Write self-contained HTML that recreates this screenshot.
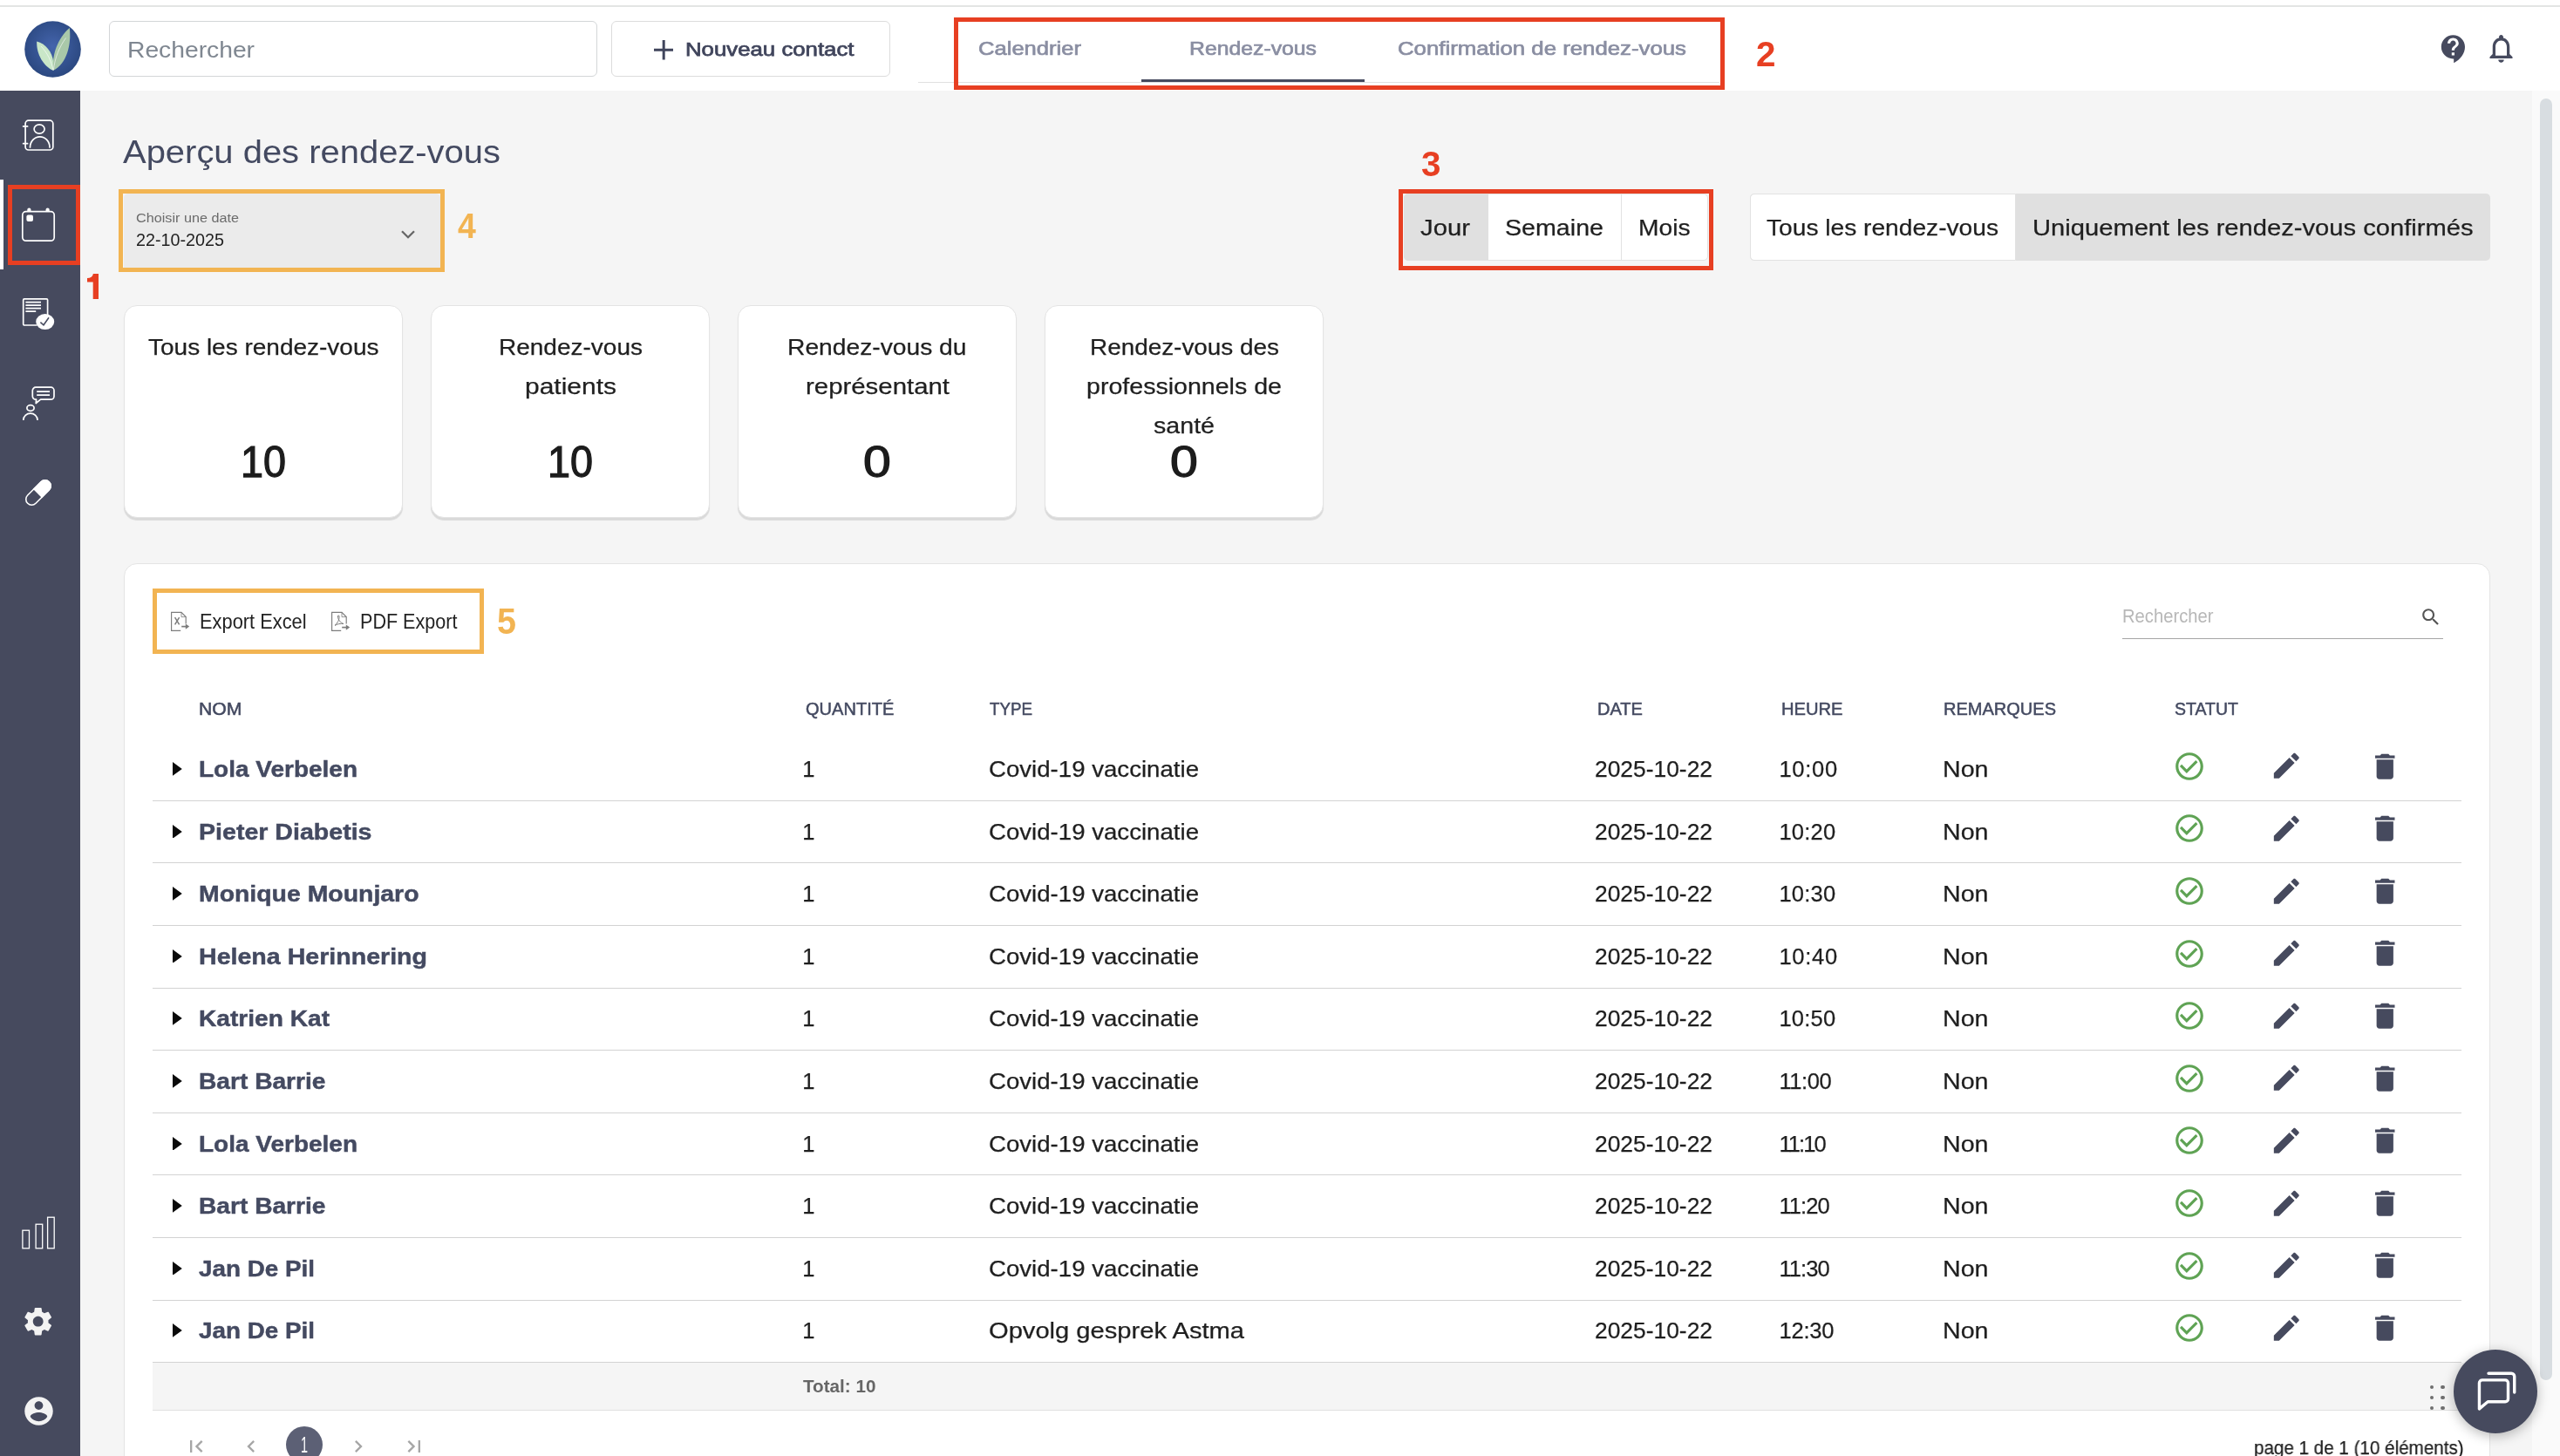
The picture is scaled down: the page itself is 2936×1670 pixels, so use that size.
<!DOCTYPE html>
<html lang="fr"><head><meta charset="utf-8"><title>Aperçu des rendez-vous</title><style>html,body{margin:0;padding:0;}body{width:2936px;height:1670px;overflow:hidden;position:relative;background:#f5f5f5;font-family:"Liberation Sans", sans-serif;}
#root{position:absolute;left:0;top:0;width:2936px;height:1670px;will-change:transform;}.a{position:absolute;display:block;}.t{position:absolute;white-space:nowrap;font-family:"Liberation Sans", sans-serif;}</style></head><body><div id="root">
<div class="a" style="left:0.00px;top:0.00px;width:2936.00px;height:104.00px;background:#fff;"></div>
<div class="a" style="left:0.00px;top:6.00px;width:2936.00px;height:2.00px;background:#e3e5e4;"></div>
<div class="a" style="left:0.00px;top:104.00px;width:2936.00px;height:1566.00px;background:#f5f5f5;"></div>
<div class="a" style="left:2904.00px;top:104.00px;width:32.00px;height:1566.00px;background:#fafafa;"></div>
<div class="a" style="left:2913.30px;top:112.70px;width:13.40px;height:1470.00px;background:#d8dde1;border-radius:7px;"></div>
<div class="a" style="left:0.00px;top:104.00px;width:92.00px;height:1566.00px;background:#464a5e;"></div>
<div class="a" style="left:0.00px;top:206.00px;width:4.00px;height:103.00px;background:#fff;"></div>
<svg class="a" style="left:28.00px;top:23.60px;" width="65.00" height="65.00" viewBox="0 0 65 65"><defs><radialGradient id="lg" cx="50%" cy="45%" r="55%"><stop offset="0" stop-color="#4464ac"/><stop offset="1" stop-color="#2b4880"/></radialGradient></defs>
<circle cx="32.5" cy="32.5" r="32.3" fill="url(#lg)"/>
<path d="M33 56.8 C22 52 13.5 38 14.2 23.4 C24 25.5 32.2 36 33.2 47 Z" fill="#c9e7c8"/>
<path d="M33 56.8 C31 40 38 20 51.8 8 C54 26 49 49 33 56.8 Z" fill="#a9c8a9"/>
<path d="M33 56.5 C31 46 26 36 19 29" stroke="#fff" stroke-width="0.7" fill="none" opacity="0.85"/>
<path d="M33.3 56.5 C35 42 40 30 47.5 19.5" stroke="#fff" stroke-width="0.7" fill="none" opacity="0.85"/></svg>
<div class="a" style="left:125.00px;top:24.00px;width:559.60px;height:63.60px;background:#fff;border:1.5px solid #d3d6d8;border-radius:6px;box-sizing:border-box;"></div>
<div id="t1" class="t" style="left:146.00px;transform-origin:0 0;top:43.78px;font-size:26.60px;line-height:26.60px;font-weight:400;color:#7f8791;transform:scaleX(1.0621);">Rechercher</div>
<div class="a" style="left:701.00px;top:24.00px;width:319.60px;height:63.60px;background:#fff;border:1.5px solid #dcdcdc;border-radius:6px;box-sizing:border-box;"></div>
<svg class="a" style="left:749.60px;top:46.40px;" width="22.40" height="22.60" viewBox="0 0 22.4 22.6"><path d="M11.2 0V22.6M0 11.3H22.4" stroke="#40455c" stroke-width="3" fill="none"/></svg>
<div id="t2" class="t" style="left:786.40px;transform-origin:0 0;top:45.58px;font-size:22.00px;line-height:22.00px;font-weight:400;color:#40455c;transform:scaleX(1.1720);-webkit-text-stroke:0.75px #40455c;">Nouveau contact</div>
<div class="a" style="left:1053.00px;top:93.60px;width:919.00px;height:1.30px;background:#e0e0e0;"></div>
<div class="a" style="left:1309.00px;top:91.10px;width:255.60px;height:2.70px;background:#464a5e;"></div>
<div id="t3" class="t" style="left:1121.80px;transform-origin:0 0;top:44.67px;font-size:22.60px;line-height:22.60px;font-weight:400;color:#8a8ea2;transform:scaleX(1.1321);-webkit-text-stroke:0.70px #8a8ea2;">Calendrier</div>
<div id="t4" class="t" style="left:1364.00px;transform-origin:0 0;top:44.67px;font-size:22.60px;line-height:22.60px;font-weight:400;color:#8a8ea2;transform:scaleX(1.0967);-webkit-text-stroke:0.70px #8a8ea2;">Rendez-vous</div>
<div id="t5" class="t" style="left:1603.00px;transform-origin:0 0;top:44.67px;font-size:22.60px;line-height:22.60px;font-weight:400;color:#8a8ea2;transform:scaleX(1.1409);-webkit-text-stroke:0.70px #8a8ea2;">Confirmation de rendez-vous</div>
<div class="a" style="left:1094.00px;top:20.40px;width:883.60px;height:82.20px;border:5.4px solid #e73f22;box-sizing:border-box;"></div>
<div id="t6" class="t" style="left:2013.50px;transform-origin:0 0;top:42.14px;font-size:40.00px;line-height:40.00px;font-weight:700;color:#e73f22;transform:scaleX(1.0112);">2</div>
<svg class="a" style="left:2795.20px;top:36.60px;" width="38.40" height="38.40" viewBox="0 0 24 24"><path fill="#464a5e" d="M11.5 2C6.81 2 3 5.81 3 10.5S6.81 19 11.5 19h.5v3c4.86-2.34 8-7 8-11.5C20 5.81 16.19 2 11.5 2zm1 14.5h-2v-2h2v2zm0-3.5h-2c0-3.25 3-3 3-5 0-1.1-.9-2-2-2s-2 .9-2 2h-2c0-2.21 1.79-4 4-4s4 1.79 4 4c0 2.5-3 2.75-3 5z"/></svg>
<svg class="a" style="left:2849.30px;top:36.10px;" width="39.00" height="39.00" viewBox="0 0 24 24"><path fill="#464a5e" d="M12 22c1.1 0 2-.9 2-2h-4c0 1.1.9 2 2 2zm6-6v-5c0-3.07-1.63-5.64-4.5-6.32V4c0-.83-.67-1.5-1.5-1.5s-1.5.67-1.5 1.5v.68C7.64 5.36 6 7.92 6 11v5l-2 2v1h16v-1l-2-2zm-2 1H8v-6c0-2.48 1.51-4.5 4-4.5s4 2.02 4 4.5v6z"/></svg>
<svg class="a" style="left:22.00px;top:132.00px;" width="44.00" height="46.00" viewBox="0 0 44 46"><g stroke="#fff" fill="none" stroke-width="1.7" stroke-linecap="round" stroke-linejoin="round" stroke-width="2.1"><rect x="7.1" y="6.2" width="31.7" height="33.8" rx="3.6"/>
<ellipse cx="23.1" cy="16" rx="6" ry="5.2"/><path d="M12.5 37 a11.25 12.2 0 0 1 22.5 0"/>
<path d="M4.6 12.9h5M4.6 32.7h5"/></g></svg>
<div class="a" style="left:9.00px;top:212.00px;width:83.00px;height:92.00px;border:5px solid #e73f22;box-sizing:border-box;"></div>
<svg class="a" style="left:100.00px;top:313.90px;" width="13.20" height="29.00" viewBox="0 0 13.2 29"><path d="M6.9 0H13.2V29H6.7V9.4H0V5C3.9 4.9 6.3 3.4 6.9 0Z" fill="#e73f22"/></svg>
<svg class="a" style="left:22.00px;top:234.00px;" width="44.00" height="46.00" viewBox="0 0 44 46"><g stroke="#fff" fill="none" stroke-width="1.7" stroke-linecap="round" stroke-linejoin="round" stroke-width="2"><rect x="3.8" y="8.6" width="36.4" height="33.6" rx="4"/>
</g><path d="M9.3 8.2V6.6a2.1 2.1 0 0 1 4.2 0v1.6zM30.5 8.2V6.6a2.1 2.1 0 0 1 4.2 0v1.6z" fill="#fff"/><rect x="8.4" y="12.6" width="7.6" height="7.4" rx="2" fill="#fff"/></svg>
<svg class="a" style="left:22.00px;top:336.00px;" width="48.00" height="48.00" viewBox="0 0 48 48"><g stroke="#fff" fill="none" stroke-width="1.7" stroke-linecap="round" stroke-linejoin="round" stroke-width="1.6"><path d="M32.6 25 V8 a1.2 1.2 0 0 0 -1.2 -1.2 H5.9 a1.2 1.2 0 0 0 -1.2 1.2 V35.8 a1.2 1.2 0 0 0 1.2 1.2 H20"/>
<path d="M7.4 10.6h17.6M7.4 14.05h17.6M7.4 17.6h17.6M7.4 21.1h11.8" stroke-linecap="butt"/></g>
<ellipse cx="29.7" cy="33.1" rx="10.5" ry="9" fill="#fff"/><path d="M24.4 33.6l3.6 3.2 6-8.6" stroke="#464a5e" stroke-width="1.5" fill="none"/></svg>
<svg class="a" style="left:22.00px;top:438.00px;" width="46.00" height="48.00" viewBox="0 0 46 48"><g stroke="#fff" fill="none" stroke-width="1.7" stroke-linecap="round" stroke-linejoin="round" stroke-width="1.7"><path d="M19 6.2h17.3a3.7 3.7 0 0 1 3.7 3.7v6.6a3.7 3.7 0 0 1-3.7 3.7H24.6l-5.4 4.3.4-4.3H19a3.7 3.7 0 0 1-3.7-3.7V9.9A3.7 3.7 0 0 1 19 6.2z"/>
<path d="M20.2 11.2h14.8M20.2 15.1h14.8" stroke-linecap="butt"/><ellipse cx="13" cy="30" rx="4.1" ry="3.3"/><path d="M4.8 44 v-.2 a8.1 7.7 0 0 1 16.2 0 v.2" stroke-linecap="butt"/></g></svg>
<svg class="a" style="left:24.30px;top:544.80px;" width="40.00" height="40.00" viewBox="0 0 40 40"><g transform="rotate(-45 20 20)"><rect x="2.6" y="13.4" width="34.8" height="13.2" rx="6.6" fill="none" stroke="#fff" stroke-width="1.6"/>
<path d="M19.4 13.4h11.4a6.6 6.6 0 0 1 0 13.2H19.4z" fill="#fff" stroke="#fff" stroke-width="1.6"/></g></svg>
<svg class="a" style="left:22.00px;top:1392.00px;" width="44.00" height="44.00" viewBox="0 0 44 44"><g stroke="#fff" fill="none" stroke-width="1.3"><rect x="3.9" y="19.2" width="7.6" height="20.6"/><rect x="19.1" y="12.2" width="7.6" height="27.6"/><rect x="32.6" y="4.2" width="7.6" height="35.6"/></g></svg>
<svg class="a" style="left:24.30px;top:1496.00px;" width="39.40" height="39.40" viewBox="0 0 24 24"><path fill="#f3f3f3" d="M19.14 12.94c.04-.3.06-.61.06-.94 0-.32-.02-.64-.07-.94l2.03-1.58c.18-.14.23-.41.12-.61l-1.92-3.32c-.12-.22-.37-.29-.59-.22l-2.39.96c-.5-.38-1.03-.7-1.62-.94l-.36-2.54c-.04-.24-.24-.41-.48-.41h-3.84c-.24 0-.43.17-.47.41l-.36 2.54c-.59.24-1.13.57-1.62.94l-2.39-.96c-.22-.08-.47 0-.59.22L2.74 8.87c-.12.21-.08.47.12.61l2.03 1.58c-.05.3-.09.63-.09.94s.02.64.07.94l-2.03 1.58c-.18.14-.23.41-.12.61l1.92 3.32c.12.22.37.29.59.22l2.39-.96c.5.38 1.03.7 1.62.94l.36 2.54c.05.24.24.41.48.41h3.84c.24 0 .44-.17.47-.41l.36-2.54c.59-.24 1.13-.56 1.62-.94l2.39.96c.22.08.47 0 .59-.22l1.92-3.32c.12-.22.07-.47-.12-.61l-2.01-1.58zM12 15.6c-1.98 0-3.6-1.62-3.6-3.6s1.62-3.6 3.6-3.6 3.6 1.62 3.6 3.6-1.62 3.6-3.6 3.6z"/></svg>
<svg class="a" style="left:24.50px;top:1599.30px;" width="39.00" height="39.00" viewBox="0 0 24 24"><path fill="#f3f3f3" d="M12 2C6.48 2 2 6.48 2 12s4.48 10 10 10 10-4.48 10-10S17.52 2 12 2zm0 3c1.66 0 3 1.34 3 3s-1.34 3-3 3-3-1.34-3-3 1.34-3 3-3zm0 14.2c-2.5 0-4.71-1.28-6-3.22.03-1.99 4-3.08 6-3.08 1.99 0 5.97 1.09 6 3.08-1.29 1.94-3.5 3.22-6 3.22z"/></svg>
<div id="t7" class="t" style="left:141.00px;transform-origin:0 0;top:157.36px;font-size:36.20px;line-height:36.20px;font-weight:400;color:#444a61;transform:scaleX(1.1039);">Aperçu des rendez-vous</div>
<div class="a" style="left:141.60px;top:222.20px;width:363.20px;height:84.80px;background:#ebebeb;border-radius:5px 5px 0 0;"></div>
<div class="a" style="left:136.00px;top:217.00px;width:373.80px;height:94.60px;border:5px solid #f2b452;box-sizing:border-box;"></div>
<div id="t8" class="t" style="left:155.50px;transform-origin:0 0;top:241.96px;font-size:15.40px;line-height:15.40px;font-weight:400;color:#6b6b6b;transform:scaleX(1.0528);">Choisir une date</div>
<div id="t9" class="t" style="left:155.50px;transform-origin:0 0;top:265.36px;font-size:20.60px;line-height:20.60px;font-weight:400;color:#1f1f1f;transform:scaleX(0.9588);">22-10-2025</div>
<svg class="a" style="left:459.00px;top:263.00px;" width="18.00" height="12.00" viewBox="0 0 18 12"><path d="M2 2.2l7 7 7-7" stroke="#666" stroke-width="2.3" fill="none"/></svg>
<div id="t10" class="t" style="left:525.20px;transform-origin:0 0;top:239.29px;font-size:41.00px;line-height:41.00px;font-weight:700;color:#f2b452;transform:scaleX(0.9118);">4</div>
<div id="t11" class="t" style="left:1629.50px;transform-origin:0 0;top:168.14px;font-size:40.00px;line-height:40.00px;font-weight:700;color:#e73f22;transform:scaleX(1.0112);">3</div>
<div class="a" style="left:1610.00px;top:222.30px;width:349.00px;height:77.20px;background:#fff;border:1px solid #e2e2e2;border-radius:5px;box-sizing:border-box;"></div>
<div class="a" style="left:1610.00px;top:222.30px;width:97.00px;height:77.20px;background:#e0e0e0;border-radius:5px 0 0 5px;"></div>
<div class="a" style="left:1859.00px;top:223.30px;width:1.00px;height:75.20px;background:#e2e2e2;"></div>
<div id="t12" class="t" style="left:1629.00px;transform-origin:0 0;top:249.16px;font-size:25.80px;line-height:25.80px;font-weight:400;color:#1f1f1f;transform:scaleX(1.1357);-webkit-text-stroke:0.25px #1f1f1f;">Jour</div>
<div id="t13" class="t" style="left:1726.00px;transform-origin:0 0;top:249.16px;font-size:25.80px;line-height:25.80px;font-weight:400;color:#1f1f1f;transform:scaleX(1.1097);-webkit-text-stroke:0.25px #1f1f1f;">Semaine</div>
<div id="t14" class="t" style="left:1879.00px;transform-origin:0 0;top:249.16px;font-size:25.80px;line-height:25.80px;font-weight:400;color:#1f1f1f;transform:scaleX(1.0924);-webkit-text-stroke:0.25px #1f1f1f;">Mois</div>
<div class="a" style="left:1603.80px;top:216.50px;width:361.00px;height:93.00px;border:5.4px solid #e73f22;box-sizing:border-box;"></div>
<div class="a" style="left:2007.00px;top:222.30px;width:849.00px;height:77.20px;background:#e0e0e0;border-radius:5px;"></div>
<div class="a" style="left:2007.00px;top:222.30px;width:304.50px;height:77.20px;background:#fff;border:1px solid #e2e2e2;border-radius:5px 0 0 5px;box-sizing:border-box;"></div>
<div id="t15" class="t" style="left:2026.00px;transform-origin:0 0;top:249.16px;font-size:25.80px;line-height:25.80px;font-weight:400;color:#1f1f1f;transform:scaleX(1.0912);-webkit-text-stroke:0.25px #1f1f1f;">Tous les rendez-vous</div>
<div id="t16" class="t" style="left:2331.00px;transform-origin:0 0;top:249.16px;font-size:25.80px;line-height:25.80px;font-weight:400;color:#1f1f1f;transform:scaleX(1.1300);-webkit-text-stroke:0.25px #1f1f1f;">Uniquement les rendez-vous confirmés</div>
<div class="a" style="left:142.20px;top:350.20px;width:320.00px;height:244.20px;background:#fff;border:1px solid #e4e4e4;border-radius:15px;box-sizing:border-box;box-shadow:0 3px 1px rgba(0,0,0,0.115);"></div>
<div id="t17" class="t" style="left:169.75px;transform-origin:0 0;top:385.64px;font-size:25.70px;line-height:25.70px;font-weight:400;color:#1f1f1f;transform:scaleX(1.0897);-webkit-text-stroke:0.25px #1f1f1f;">Tous les rendez-vous</div>
<div id="t18" class="t" style="left:276.00px;transform-origin:0 0;top:504.78px;font-size:49.40px;line-height:49.40px;font-weight:400;color:#1c1c1c;transform:scaleX(0.9465);-webkit-text-stroke:1.25px #1c1c1c;">10</div>
<div class="a" style="left:494.20px;top:350.20px;width:320.00px;height:244.20px;background:#fff;border:1px solid #e4e4e4;border-radius:15px;box-sizing:border-box;box-shadow:0 3px 1px rgba(0,0,0,0.115);"></div>
<div id="t19" class="t" style="left:571.50px;transform-origin:0 0;top:385.64px;font-size:25.70px;line-height:25.70px;font-weight:400;color:#1f1f1f;transform:scaleX(1.0901);-webkit-text-stroke:0.25px #1f1f1f;">Rendez-vous</div>
<div id="t20" class="t" style="left:601.50px;transform-origin:0 0;top:430.84px;font-size:25.70px;line-height:25.70px;font-weight:400;color:#1f1f1f;transform:scaleX(1.1669);-webkit-text-stroke:0.25px #1f1f1f;">patients</div>
<div id="t21" class="t" style="left:628.00px;transform-origin:0 0;top:504.78px;font-size:49.40px;line-height:49.40px;font-weight:400;color:#1c1c1c;transform:scaleX(0.9465);-webkit-text-stroke:1.25px #1c1c1c;">10</div>
<div class="a" style="left:846.20px;top:350.20px;width:320.00px;height:244.20px;background:#fff;border:1px solid #e4e4e4;border-radius:15px;box-sizing:border-box;box-shadow:0 3px 1px rgba(0,0,0,0.115);"></div>
<div id="t22" class="t" style="left:903.25px;transform-origin:0 0;top:385.64px;font-size:25.70px;line-height:25.70px;font-weight:400;color:#1f1f1f;transform:scaleX(1.0986);-webkit-text-stroke:0.25px #1f1f1f;">Rendez-vous du</div>
<div id="t23" class="t" style="left:923.50px;transform-origin:0 0;top:430.84px;font-size:25.70px;line-height:25.70px;font-weight:400;color:#1f1f1f;transform:scaleX(1.1440);-webkit-text-stroke:0.25px #1f1f1f;">représentant</div>
<div id="t24" class="t" style="left:990.10px;transform-origin:0 0;top:504.78px;font-size:49.40px;line-height:49.40px;font-weight:400;color:#1c1c1c;transform:scaleX(1.1577);-webkit-text-stroke:1.25px #1c1c1c;">0</div>
<div class="a" style="left:1198.20px;top:350.20px;width:320.00px;height:244.20px;background:#fff;border:1px solid #e4e4e4;border-radius:15px;box-sizing:border-box;box-shadow:0 3px 1px rgba(0,0,0,0.115);"></div>
<div id="t25" class="t" style="left:1249.50px;transform-origin:0 0;top:385.64px;font-size:25.70px;line-height:25.70px;font-weight:400;color:#1f1f1f;transform:scaleX(1.0855);-webkit-text-stroke:0.25px #1f1f1f;">Rendez-vous des</div>
<div id="t26" class="t" style="left:1246.00px;transform-origin:0 0;top:430.84px;font-size:25.70px;line-height:25.70px;font-weight:400;color:#1f1f1f;transform:scaleX(1.1124);-webkit-text-stroke:0.25px #1f1f1f;">professionnels de</div>
<div id="t27" class="t" style="left:1323.00px;transform-origin:0 0;top:476.04px;font-size:25.70px;line-height:25.70px;font-weight:400;color:#1f1f1f;transform:scaleX(1.1139);-webkit-text-stroke:0.25px #1f1f1f;">santé</div>
<div id="t28" class="t" style="left:1342.10px;transform-origin:0 0;top:504.78px;font-size:49.40px;line-height:49.40px;font-weight:400;color:#1c1c1c;transform:scaleX(1.1577);-webkit-text-stroke:1.25px #1c1c1c;">0</div>
<div class="a" style="left:142.40px;top:646.40px;width:2714.10px;height:1100.00px;background:#fff;border:1px solid #e4e4e4;border-radius:15px;box-sizing:border-box;"></div>
<div class="a" style="left:175.20px;top:675.20px;width:379.50px;height:74.80px;border:5px solid #f2b452;box-sizing:border-box;"></div>
<div id="t29" class="t" style="left:570.00px;transform-origin:0 0;top:692.08px;font-size:42.20px;line-height:42.20px;font-weight:700;color:#f2b452;transform:scaleX(0.9374);">5</div>
<svg class="a" style="left:195.00px;top:701.00px;" width="23.00" height="24.00" viewBox="0 0 23 24"><g fill="none" stroke="#7c7c7c" stroke-width="1.15"><path d="M18.2 14.6V6.6L13 1.4H1.6v21h10.6"/><path d="M13 1.4v5.2h5.2" stroke-width=".8"/></g>
<path d="M5.6 7.2l5 8.2M10.6 7.2l-5 8.2" stroke="#7c7c7c" stroke-width="1.5" fill="none"/>
<path d="M13.2 17.6h5.4" stroke="#7c7c7c" stroke-width="1.7" fill="none"/><path d="M17.8 14.4l4.4 3.2-4.4 3.2z" fill="#7c7c7c"/></svg>
<div id="t30" class="t" style="left:229.20px;transform-origin:0 0;top:702.22px;font-size:23.60px;line-height:23.60px;font-weight:400;color:#222;transform:scaleX(0.9256);">Export Excel</div>
<svg class="a" style="left:379.20px;top:701.00px;" width="23.00" height="24.00" viewBox="0 0 23 24"><g fill="none" stroke="#7c7c7c" stroke-width="1.15"><path d="M18.2 14.6V6.6L13 1.4H1.6v21h10.6"/><path d="M13 1.4v5.2h5.2" stroke-width=".8"/></g>
<path d="M5 16.4c3.2-2.8 5.4-6.8 5-10.6-.2-1.3-1.6-1.3-1.6.1.2 4 3 7.2 6.6 8.6-3.4-.6-7.2.2-10 1.9z" stroke="#7c7c7c" stroke-width="1" fill="none"/>
<path d="M13.2 18.6h5.4" stroke="#7c7c7c" stroke-width="1.7" fill="none"/><path d="M17.8 15.4l4.4 3.2-4.4 3.2z" fill="#7c7c7c"/></svg>
<div id="t31" class="t" style="left:412.60px;transform-origin:0 0;top:702.22px;font-size:23.60px;line-height:23.60px;font-weight:400;color:#222;transform:scaleX(0.9136);">PDF Export</div>
<div id="t32" class="t" style="left:2434.00px;transform-origin:0 0;top:696.68px;font-size:21.40px;line-height:21.40px;font-weight:400;color:#b7b7b7;transform:scaleX(0.9450);">Rechercher</div>
<div class="a" style="left:2433.70px;top:731.70px;width:368.60px;height:1.20px;background:#a6a6a6;"></div>
<svg class="a" style="left:2775.20px;top:694.90px;" width="25.60" height="25.60" viewBox="0 0 24 24"><path fill="#555" d="M15.5 14h-.79l-.28-.27C15.41 12.59 16 11.11 16 9.5 16 5.91 13.09 3 9.5 3S3 5.91 3 9.5 5.91 16 9.5 16c1.61 0 3.09-.59 4.23-1.57l.27.28v.79l5 4.99L20.49 19l-4.99-5zm-6 0C7.01 14 5 11.99 5 9.5S7.01 5 9.5 5 14 7.01 14 9.5 11.99 14 9.5 14z"/></svg>
<div id="t33" class="t" style="left:227.50px;transform-origin:0 0;top:803.64px;font-size:19.80px;line-height:19.80px;font-weight:400;color:#444a61;transform:scaleX(1.0724);-webkit-text-stroke:0.50px #444a61;">NOM</div>
<div id="t34" class="t" style="left:923.50px;transform-origin:0 0;top:803.64px;font-size:19.80px;line-height:19.80px;font-weight:400;color:#444a61;transform:scaleX(1.0148);-webkit-text-stroke:0.50px #444a61;">QUANTITÉ</div>
<div id="t35" class="t" style="left:1135.00px;transform-origin:0 0;top:803.64px;font-size:19.80px;line-height:19.80px;font-weight:400;color:#444a61;transform:scaleX(0.9483);-webkit-text-stroke:0.50px #444a61;">TYPE</div>
<div id="t36" class="t" style="left:1831.50px;transform-origin:0 0;top:803.64px;font-size:19.80px;line-height:19.80px;font-weight:400;color:#444a61;transform:scaleX(1.0137);-webkit-text-stroke:0.50px #444a61;">DATE</div>
<div id="t37" class="t" style="left:2043.00px;transform-origin:0 0;top:803.64px;font-size:19.80px;line-height:19.80px;font-weight:400;color:#444a61;transform:scaleX(1.0181);-webkit-text-stroke:0.50px #444a61;">HEURE</div>
<div id="t38" class="t" style="left:2228.50px;transform-origin:0 0;top:803.64px;font-size:19.80px;line-height:19.80px;font-weight:400;color:#444a61;transform:scaleX(1.0118);-webkit-text-stroke:0.50px #444a61;">REMARQUES</div>
<div id="t39" class="t" style="left:2493.50px;transform-origin:0 0;top:803.64px;font-size:19.80px;line-height:19.80px;font-weight:400;color:#444a61;transform:scaleX(0.9865);-webkit-text-stroke:0.50px #444a61;">STATUT</div>
<svg class="a" style="left:197.80px;top:873.90px;" width="10.80" height="15.80" viewBox="0 0 10.8 15.8"><path d="M0 0L10.8 7.9 0 15.8z" fill="#0a0a0a"/></svg>
<div id="t40" class="t" style="left:227.60px;transform-origin:0 0;top:869.93px;font-size:25.60px;line-height:25.60px;font-weight:700;color:#444a61;transform:scaleX(1.0936);-webkit-text-stroke:0.45px #444a61;">Lola Verbelen</div>
<div id="t41" class="t" style="left:920.20px;transform-origin:0 0;top:870.01px;font-size:25.50px;line-height:25.50px;font-weight:400;color:#1f1f1f;-webkit-text-stroke:0.25px #1f1f1f;">1</div>
<div id="t42" class="t" style="left:1134.00px;transform-origin:0 0;top:870.01px;font-size:25.50px;line-height:25.50px;font-weight:400;color:#1f1f1f;transform:scaleX(1.0830);-webkit-text-stroke:0.25px #1f1f1f;">Covid-19 vaccinatie</div>
<div id="t43" class="t" style="left:1829.00px;transform-origin:0 0;top:870.01px;font-size:25.50px;line-height:25.50px;font-weight:400;color:#1f1f1f;transform:scaleX(1.0349);-webkit-text-stroke:0.25px #1f1f1f;">2025-10-22</div>
<div id="t44" class="t" style="left:2040.40px;transform-origin:0 0;top:870.01px;font-size:25.50px;line-height:25.50px;font-weight:400;color:#1f1f1f;letter-spacing:0.738px;-webkit-text-stroke:0.25px #1f1f1f;">10:00</div>
<div id="t45" class="t" style="left:2227.50px;transform-origin:0 0;top:870.01px;font-size:25.50px;line-height:25.50px;font-weight:400;color:#1f1f1f;transform:scaleX(1.1222);-webkit-text-stroke:0.25px #1f1f1f;">Non</div>
<svg class="a" style="left:2491.80px;top:859.75px;" width="38.00" height="38.00" viewBox="0 0 24 24"><path fill="#5fa354" d="M16.59 7.58L10 14.17l-3.59-3.58L5 12l5 5 8-8zM12 2C6.48 2 2 6.48 2 12s4.48 10 10 10 10-4.48 10-10S17.52 2 12 2zm0 18c-4.42 0-8-3.58-8-8s3.58-8 8-8 8 3.58 8 8-3.58 8-8 8z"/></svg>
<svg class="a" style="left:2603.40px;top:859.45px;" width="38.60" height="38.60" viewBox="0 0 24 24"><path fill="#464a5e" d="M3 17.25V21h3.75L17.81 9.94l-3.75-3.75L3 17.25zM20.71 7.04c.39-.39.39-1.02 0-1.41l-2.34-2.34c-.39-.39-1.02-.39-1.41 0l-1.83 1.83 3.75 3.75 1.83-1.83z"/></svg>
<svg class="a" style="left:2715.70px;top:859.50px;" width="38.50" height="38.50" viewBox="0 0 24 24"><path fill="#464a5e" d="M6 19c0 1.1.9 2 2 2h8c1.1 0 2-.9 2-2V7H6v12zM19 4h-3.5l-1-1h-5l-1 1H5v2h14V4z"/></svg>
<div class="a" style="left:175.00px;top:917.75px;width:2648.00px;height:1.10px;background:#d3d3d3;"></div>
<svg class="a" style="left:197.80px;top:945.50px;" width="10.80" height="15.80" viewBox="0 0 10.8 15.8"><path d="M0 0L10.8 7.9 0 15.8z" fill="#0a0a0a"/></svg>
<div id="t46" class="t" style="left:227.60px;transform-origin:0 0;top:941.53px;font-size:25.60px;line-height:25.60px;font-weight:700;color:#444a61;transform:scaleX(1.1163);-webkit-text-stroke:0.45px #444a61;">Pieter Diabetis</div>
<div id="t47" class="t" style="left:920.20px;transform-origin:0 0;top:941.61px;font-size:25.50px;line-height:25.50px;font-weight:400;color:#1f1f1f;-webkit-text-stroke:0.25px #1f1f1f;">1</div>
<div id="t48" class="t" style="left:1134.00px;transform-origin:0 0;top:941.61px;font-size:25.50px;line-height:25.50px;font-weight:400;color:#1f1f1f;transform:scaleX(1.0830);-webkit-text-stroke:0.25px #1f1f1f;">Covid-19 vaccinatie</div>
<div id="t49" class="t" style="left:1829.00px;transform-origin:0 0;top:941.61px;font-size:25.50px;line-height:25.50px;font-weight:400;color:#1f1f1f;transform:scaleX(1.0349);-webkit-text-stroke:0.25px #1f1f1f;">2025-10-22</div>
<div id="t50" class="t" style="left:2040.40px;transform-origin:0 0;top:941.61px;font-size:25.50px;line-height:25.50px;font-weight:400;color:#1f1f1f;letter-spacing:0.237px;-webkit-text-stroke:0.25px #1f1f1f;">10:20</div>
<div id="t51" class="t" style="left:2227.50px;transform-origin:0 0;top:941.61px;font-size:25.50px;line-height:25.50px;font-weight:400;color:#1f1f1f;transform:scaleX(1.1222);-webkit-text-stroke:0.25px #1f1f1f;">Non</div>
<svg class="a" style="left:2491.80px;top:931.35px;" width="38.00" height="38.00" viewBox="0 0 24 24"><path fill="#5fa354" d="M16.59 7.58L10 14.17l-3.59-3.58L5 12l5 5 8-8zM12 2C6.48 2 2 6.48 2 12s4.48 10 10 10 10-4.48 10-10S17.52 2 12 2zm0 18c-4.42 0-8-3.58-8-8s3.58-8 8-8 8 3.58 8 8-3.58 8-8 8z"/></svg>
<svg class="a" style="left:2603.40px;top:931.05px;" width="38.60" height="38.60" viewBox="0 0 24 24"><path fill="#464a5e" d="M3 17.25V21h3.75L17.81 9.94l-3.75-3.75L3 17.25zM20.71 7.04c.39-.39.39-1.02 0-1.41l-2.34-2.34c-.39-.39-1.02-.39-1.41 0l-1.83 1.83 3.75 3.75 1.83-1.83z"/></svg>
<svg class="a" style="left:2715.70px;top:931.10px;" width="38.50" height="38.50" viewBox="0 0 24 24"><path fill="#464a5e" d="M6 19c0 1.1.9 2 2 2h8c1.1 0 2-.9 2-2V7H6v12zM19 4h-3.5l-1-1h-5l-1 1H5v2h14V4z"/></svg>
<div class="a" style="left:175.00px;top:989.35px;width:2648.00px;height:1.10px;background:#d3d3d3;"></div>
<svg class="a" style="left:197.80px;top:1017.10px;" width="10.80" height="15.80" viewBox="0 0 10.8 15.8"><path d="M0 0L10.8 7.9 0 15.8z" fill="#0a0a0a"/></svg>
<div id="t52" class="t" style="left:227.60px;transform-origin:0 0;top:1013.13px;font-size:25.60px;line-height:25.60px;font-weight:700;color:#444a61;transform:scaleX(1.1100);-webkit-text-stroke:0.45px #444a61;">Monique Mounjaro</div>
<div id="t53" class="t" style="left:920.20px;transform-origin:0 0;top:1013.21px;font-size:25.50px;line-height:25.50px;font-weight:400;color:#1f1f1f;-webkit-text-stroke:0.25px #1f1f1f;">1</div>
<div id="t54" class="t" style="left:1134.00px;transform-origin:0 0;top:1013.21px;font-size:25.50px;line-height:25.50px;font-weight:400;color:#1f1f1f;transform:scaleX(1.0830);-webkit-text-stroke:0.25px #1f1f1f;">Covid-19 vaccinatie</div>
<div id="t55" class="t" style="left:1829.00px;transform-origin:0 0;top:1013.21px;font-size:25.50px;line-height:25.50px;font-weight:400;color:#1f1f1f;transform:scaleX(1.0349);-webkit-text-stroke:0.25px #1f1f1f;">2025-10-22</div>
<div id="t56" class="t" style="left:2040.40px;transform-origin:0 0;top:1013.21px;font-size:25.50px;line-height:25.50px;font-weight:400;color:#1f1f1f;letter-spacing:0.237px;-webkit-text-stroke:0.25px #1f1f1f;">10:30</div>
<div id="t57" class="t" style="left:2227.50px;transform-origin:0 0;top:1013.21px;font-size:25.50px;line-height:25.50px;font-weight:400;color:#1f1f1f;transform:scaleX(1.1222);-webkit-text-stroke:0.25px #1f1f1f;">Non</div>
<svg class="a" style="left:2491.80px;top:1002.95px;" width="38.00" height="38.00" viewBox="0 0 24 24"><path fill="#5fa354" d="M16.59 7.58L10 14.17l-3.59-3.58L5 12l5 5 8-8zM12 2C6.48 2 2 6.48 2 12s4.48 10 10 10 10-4.48 10-10S17.52 2 12 2zm0 18c-4.42 0-8-3.58-8-8s3.58-8 8-8 8 3.58 8 8-3.58 8-8 8z"/></svg>
<svg class="a" style="left:2603.40px;top:1002.65px;" width="38.60" height="38.60" viewBox="0 0 24 24"><path fill="#464a5e" d="M3 17.25V21h3.75L17.81 9.94l-3.75-3.75L3 17.25zM20.71 7.04c.39-.39.39-1.02 0-1.41l-2.34-2.34c-.39-.39-1.02-.39-1.41 0l-1.83 1.83 3.75 3.75 1.83-1.83z"/></svg>
<svg class="a" style="left:2715.70px;top:1002.70px;" width="38.50" height="38.50" viewBox="0 0 24 24"><path fill="#464a5e" d="M6 19c0 1.1.9 2 2 2h8c1.1 0 2-.9 2-2V7H6v12zM19 4h-3.5l-1-1h-5l-1 1H5v2h14V4z"/></svg>
<div class="a" style="left:175.00px;top:1060.95px;width:2648.00px;height:1.10px;background:#d3d3d3;"></div>
<svg class="a" style="left:197.80px;top:1088.70px;" width="10.80" height="15.80" viewBox="0 0 10.8 15.8"><path d="M0 0L10.8 7.9 0 15.8z" fill="#0a0a0a"/></svg>
<div id="t58" class="t" style="left:227.60px;transform-origin:0 0;top:1084.73px;font-size:25.60px;line-height:25.60px;font-weight:700;color:#444a61;transform:scaleX(1.1165);-webkit-text-stroke:0.45px #444a61;">Helena Herinnering</div>
<div id="t59" class="t" style="left:920.20px;transform-origin:0 0;top:1084.81px;font-size:25.50px;line-height:25.50px;font-weight:400;color:#1f1f1f;-webkit-text-stroke:0.25px #1f1f1f;">1</div>
<div id="t60" class="t" style="left:1134.00px;transform-origin:0 0;top:1084.81px;font-size:25.50px;line-height:25.50px;font-weight:400;color:#1f1f1f;transform:scaleX(1.0830);-webkit-text-stroke:0.25px #1f1f1f;">Covid-19 vaccinatie</div>
<div id="t61" class="t" style="left:1829.00px;transform-origin:0 0;top:1084.81px;font-size:25.50px;line-height:25.50px;font-weight:400;color:#1f1f1f;transform:scaleX(1.0349);-webkit-text-stroke:0.25px #1f1f1f;">2025-10-22</div>
<div id="t62" class="t" style="left:2040.40px;transform-origin:0 0;top:1084.81px;font-size:25.50px;line-height:25.50px;font-weight:400;color:#1f1f1f;letter-spacing:0.738px;-webkit-text-stroke:0.25px #1f1f1f;">10:40</div>
<div id="t63" class="t" style="left:2227.50px;transform-origin:0 0;top:1084.81px;font-size:25.50px;line-height:25.50px;font-weight:400;color:#1f1f1f;transform:scaleX(1.1222);-webkit-text-stroke:0.25px #1f1f1f;">Non</div>
<svg class="a" style="left:2491.80px;top:1074.55px;" width="38.00" height="38.00" viewBox="0 0 24 24"><path fill="#5fa354" d="M16.59 7.58L10 14.17l-3.59-3.58L5 12l5 5 8-8zM12 2C6.48 2 2 6.48 2 12s4.48 10 10 10 10-4.48 10-10S17.52 2 12 2zm0 18c-4.42 0-8-3.58-8-8s3.58-8 8-8 8 3.58 8 8-3.58 8-8 8z"/></svg>
<svg class="a" style="left:2603.40px;top:1074.25px;" width="38.60" height="38.60" viewBox="0 0 24 24"><path fill="#464a5e" d="M3 17.25V21h3.75L17.81 9.94l-3.75-3.75L3 17.25zM20.71 7.04c.39-.39.39-1.02 0-1.41l-2.34-2.34c-.39-.39-1.02-.39-1.41 0l-1.83 1.83 3.75 3.75 1.83-1.83z"/></svg>
<svg class="a" style="left:2715.70px;top:1074.30px;" width="38.50" height="38.50" viewBox="0 0 24 24"><path fill="#464a5e" d="M6 19c0 1.1.9 2 2 2h8c1.1 0 2-.9 2-2V7H6v12zM19 4h-3.5l-1-1h-5l-1 1H5v2h14V4z"/></svg>
<div class="a" style="left:175.00px;top:1132.55px;width:2648.00px;height:1.10px;background:#d3d3d3;"></div>
<svg class="a" style="left:197.80px;top:1160.30px;" width="10.80" height="15.80" viewBox="0 0 10.8 15.8"><path d="M0 0L10.8 7.9 0 15.8z" fill="#0a0a0a"/></svg>
<div id="t64" class="t" style="left:227.60px;transform-origin:0 0;top:1156.33px;font-size:25.60px;line-height:25.60px;font-weight:700;color:#444a61;transform:scaleX(1.0986);-webkit-text-stroke:0.45px #444a61;">Katrien Kat</div>
<div id="t65" class="t" style="left:920.20px;transform-origin:0 0;top:1156.41px;font-size:25.50px;line-height:25.50px;font-weight:400;color:#1f1f1f;-webkit-text-stroke:0.25px #1f1f1f;">1</div>
<div id="t66" class="t" style="left:1134.00px;transform-origin:0 0;top:1156.41px;font-size:25.50px;line-height:25.50px;font-weight:400;color:#1f1f1f;transform:scaleX(1.0830);-webkit-text-stroke:0.25px #1f1f1f;">Covid-19 vaccinatie</div>
<div id="t67" class="t" style="left:1829.00px;transform-origin:0 0;top:1156.41px;font-size:25.50px;line-height:25.50px;font-weight:400;color:#1f1f1f;transform:scaleX(1.0349);-webkit-text-stroke:0.25px #1f1f1f;">2025-10-22</div>
<div id="t68" class="t" style="left:2040.40px;transform-origin:0 0;top:1156.41px;font-size:25.50px;line-height:25.50px;font-weight:400;color:#1f1f1f;letter-spacing:0.237px;-webkit-text-stroke:0.25px #1f1f1f;">10:50</div>
<div id="t69" class="t" style="left:2227.50px;transform-origin:0 0;top:1156.41px;font-size:25.50px;line-height:25.50px;font-weight:400;color:#1f1f1f;transform:scaleX(1.1222);-webkit-text-stroke:0.25px #1f1f1f;">Non</div>
<svg class="a" style="left:2491.80px;top:1146.15px;" width="38.00" height="38.00" viewBox="0 0 24 24"><path fill="#5fa354" d="M16.59 7.58L10 14.17l-3.59-3.58L5 12l5 5 8-8zM12 2C6.48 2 2 6.48 2 12s4.48 10 10 10 10-4.48 10-10S17.52 2 12 2zm0 18c-4.42 0-8-3.58-8-8s3.58-8 8-8 8 3.58 8 8-3.58 8-8 8z"/></svg>
<svg class="a" style="left:2603.40px;top:1145.85px;" width="38.60" height="38.60" viewBox="0 0 24 24"><path fill="#464a5e" d="M3 17.25V21h3.75L17.81 9.94l-3.75-3.75L3 17.25zM20.71 7.04c.39-.39.39-1.02 0-1.41l-2.34-2.34c-.39-.39-1.02-.39-1.41 0l-1.83 1.83 3.75 3.75 1.83-1.83z"/></svg>
<svg class="a" style="left:2715.70px;top:1145.90px;" width="38.50" height="38.50" viewBox="0 0 24 24"><path fill="#464a5e" d="M6 19c0 1.1.9 2 2 2h8c1.1 0 2-.9 2-2V7H6v12zM19 4h-3.5l-1-1h-5l-1 1H5v2h14V4z"/></svg>
<div class="a" style="left:175.00px;top:1204.15px;width:2648.00px;height:1.10px;background:#d3d3d3;"></div>
<svg class="a" style="left:197.80px;top:1231.90px;" width="10.80" height="15.80" viewBox="0 0 10.8 15.8"><path d="M0 0L10.8 7.9 0 15.8z" fill="#0a0a0a"/></svg>
<div id="t70" class="t" style="left:227.60px;transform-origin:0 0;top:1227.93px;font-size:25.60px;line-height:25.60px;font-weight:700;color:#444a61;transform:scaleX(1.0998);-webkit-text-stroke:0.45px #444a61;">Bart Barrie</div>
<div id="t71" class="t" style="left:920.20px;transform-origin:0 0;top:1228.01px;font-size:25.50px;line-height:25.50px;font-weight:400;color:#1f1f1f;-webkit-text-stroke:0.25px #1f1f1f;">1</div>
<div id="t72" class="t" style="left:1134.00px;transform-origin:0 0;top:1228.01px;font-size:25.50px;line-height:25.50px;font-weight:400;color:#1f1f1f;transform:scaleX(1.0830);-webkit-text-stroke:0.25px #1f1f1f;">Covid-19 vaccinatie</div>
<div id="t73" class="t" style="left:1829.00px;transform-origin:0 0;top:1228.01px;font-size:25.50px;line-height:25.50px;font-weight:400;color:#1f1f1f;transform:scaleX(1.0349);-webkit-text-stroke:0.25px #1f1f1f;">2025-10-22</div>
<div id="t74" class="t" style="left:2040.40px;transform-origin:0 0;top:1228.01px;font-size:25.50px;line-height:25.50px;font-weight:400;color:#1f1f1f;letter-spacing:-0.384px;-webkit-text-stroke:0.25px #1f1f1f;">11:00</div>
<div id="t75" class="t" style="left:2227.50px;transform-origin:0 0;top:1228.01px;font-size:25.50px;line-height:25.50px;font-weight:400;color:#1f1f1f;transform:scaleX(1.1222);-webkit-text-stroke:0.25px #1f1f1f;">Non</div>
<svg class="a" style="left:2491.80px;top:1217.75px;" width="38.00" height="38.00" viewBox="0 0 24 24"><path fill="#5fa354" d="M16.59 7.58L10 14.17l-3.59-3.58L5 12l5 5 8-8zM12 2C6.48 2 2 6.48 2 12s4.48 10 10 10 10-4.48 10-10S17.52 2 12 2zm0 18c-4.42 0-8-3.58-8-8s3.58-8 8-8 8 3.58 8 8-3.58 8-8 8z"/></svg>
<svg class="a" style="left:2603.40px;top:1217.45px;" width="38.60" height="38.60" viewBox="0 0 24 24"><path fill="#464a5e" d="M3 17.25V21h3.75L17.81 9.94l-3.75-3.75L3 17.25zM20.71 7.04c.39-.39.39-1.02 0-1.41l-2.34-2.34c-.39-.39-1.02-.39-1.41 0l-1.83 1.83 3.75 3.75 1.83-1.83z"/></svg>
<svg class="a" style="left:2715.70px;top:1217.50px;" width="38.50" height="38.50" viewBox="0 0 24 24"><path fill="#464a5e" d="M6 19c0 1.1.9 2 2 2h8c1.1 0 2-.9 2-2V7H6v12zM19 4h-3.5l-1-1h-5l-1 1H5v2h14V4z"/></svg>
<div class="a" style="left:175.00px;top:1275.75px;width:2648.00px;height:1.10px;background:#d3d3d3;"></div>
<svg class="a" style="left:197.80px;top:1303.50px;" width="10.80" height="15.80" viewBox="0 0 10.8 15.8"><path d="M0 0L10.8 7.9 0 15.8z" fill="#0a0a0a"/></svg>
<div id="t76" class="t" style="left:227.60px;transform-origin:0 0;top:1299.53px;font-size:25.60px;line-height:25.60px;font-weight:700;color:#444a61;transform:scaleX(1.0936);-webkit-text-stroke:0.45px #444a61;">Lola Verbelen</div>
<div id="t77" class="t" style="left:920.20px;transform-origin:0 0;top:1299.61px;font-size:25.50px;line-height:25.50px;font-weight:400;color:#1f1f1f;-webkit-text-stroke:0.25px #1f1f1f;">1</div>
<div id="t78" class="t" style="left:1134.00px;transform-origin:0 0;top:1299.61px;font-size:25.50px;line-height:25.50px;font-weight:400;color:#1f1f1f;transform:scaleX(1.0830);-webkit-text-stroke:0.25px #1f1f1f;">Covid-19 vaccinatie</div>
<div id="t79" class="t" style="left:1829.00px;transform-origin:0 0;top:1299.61px;font-size:25.50px;line-height:25.50px;font-weight:400;color:#1f1f1f;transform:scaleX(1.0349);-webkit-text-stroke:0.25px #1f1f1f;">2025-10-22</div>
<div id="t80" class="t" style="left:2040.40px;transform-origin:0 0;top:1299.61px;font-size:25.50px;line-height:25.50px;font-weight:400;color:#1f1f1f;letter-spacing:-1.884px;-webkit-text-stroke:0.25px #1f1f1f;">11:10</div>
<div id="t81" class="t" style="left:2227.50px;transform-origin:0 0;top:1299.61px;font-size:25.50px;line-height:25.50px;font-weight:400;color:#1f1f1f;transform:scaleX(1.1222);-webkit-text-stroke:0.25px #1f1f1f;">Non</div>
<svg class="a" style="left:2491.80px;top:1289.35px;" width="38.00" height="38.00" viewBox="0 0 24 24"><path fill="#5fa354" d="M16.59 7.58L10 14.17l-3.59-3.58L5 12l5 5 8-8zM12 2C6.48 2 2 6.48 2 12s4.48 10 10 10 10-4.48 10-10S17.52 2 12 2zm0 18c-4.42 0-8-3.58-8-8s3.58-8 8-8 8 3.58 8 8-3.58 8-8 8z"/></svg>
<svg class="a" style="left:2603.40px;top:1289.05px;" width="38.60" height="38.60" viewBox="0 0 24 24"><path fill="#464a5e" d="M3 17.25V21h3.75L17.81 9.94l-3.75-3.75L3 17.25zM20.71 7.04c.39-.39.39-1.02 0-1.41l-2.34-2.34c-.39-.39-1.02-.39-1.41 0l-1.83 1.83 3.75 3.75 1.83-1.83z"/></svg>
<svg class="a" style="left:2715.70px;top:1289.10px;" width="38.50" height="38.50" viewBox="0 0 24 24"><path fill="#464a5e" d="M6 19c0 1.1.9 2 2 2h8c1.1 0 2-.9 2-2V7H6v12zM19 4h-3.5l-1-1h-5l-1 1H5v2h14V4z"/></svg>
<div class="a" style="left:175.00px;top:1347.35px;width:2648.00px;height:1.10px;background:#d3d3d3;"></div>
<svg class="a" style="left:197.80px;top:1375.10px;" width="10.80" height="15.80" viewBox="0 0 10.8 15.8"><path d="M0 0L10.8 7.9 0 15.8z" fill="#0a0a0a"/></svg>
<div id="t82" class="t" style="left:227.60px;transform-origin:0 0;top:1371.13px;font-size:25.60px;line-height:25.60px;font-weight:700;color:#444a61;transform:scaleX(1.0998);-webkit-text-stroke:0.45px #444a61;">Bart Barrie</div>
<div id="t83" class="t" style="left:920.20px;transform-origin:0 0;top:1371.21px;font-size:25.50px;line-height:25.50px;font-weight:400;color:#1f1f1f;-webkit-text-stroke:0.25px #1f1f1f;">1</div>
<div id="t84" class="t" style="left:1134.00px;transform-origin:0 0;top:1371.21px;font-size:25.50px;line-height:25.50px;font-weight:400;color:#1f1f1f;transform:scaleX(1.0830);-webkit-text-stroke:0.25px #1f1f1f;">Covid-19 vaccinatie</div>
<div id="t85" class="t" style="left:1829.00px;transform-origin:0 0;top:1371.21px;font-size:25.50px;line-height:25.50px;font-weight:400;color:#1f1f1f;transform:scaleX(1.0349);-webkit-text-stroke:0.25px #1f1f1f;">2025-10-22</div>
<div id="t86" class="t" style="left:2040.40px;transform-origin:0 0;top:1371.21px;font-size:25.50px;line-height:25.50px;font-weight:400;color:#1f1f1f;letter-spacing:-0.884px;-webkit-text-stroke:0.25px #1f1f1f;">11:20</div>
<div id="t87" class="t" style="left:2227.50px;transform-origin:0 0;top:1371.21px;font-size:25.50px;line-height:25.50px;font-weight:400;color:#1f1f1f;transform:scaleX(1.1222);-webkit-text-stroke:0.25px #1f1f1f;">Non</div>
<svg class="a" style="left:2491.80px;top:1360.95px;" width="38.00" height="38.00" viewBox="0 0 24 24"><path fill="#5fa354" d="M16.59 7.58L10 14.17l-3.59-3.58L5 12l5 5 8-8zM12 2C6.48 2 2 6.48 2 12s4.48 10 10 10 10-4.48 10-10S17.52 2 12 2zm0 18c-4.42 0-8-3.58-8-8s3.58-8 8-8 8 3.58 8 8-3.58 8-8 8z"/></svg>
<svg class="a" style="left:2603.40px;top:1360.65px;" width="38.60" height="38.60" viewBox="0 0 24 24"><path fill="#464a5e" d="M3 17.25V21h3.75L17.81 9.94l-3.75-3.75L3 17.25zM20.71 7.04c.39-.39.39-1.02 0-1.41l-2.34-2.34c-.39-.39-1.02-.39-1.41 0l-1.83 1.83 3.75 3.75 1.83-1.83z"/></svg>
<svg class="a" style="left:2715.70px;top:1360.70px;" width="38.50" height="38.50" viewBox="0 0 24 24"><path fill="#464a5e" d="M6 19c0 1.1.9 2 2 2h8c1.1 0 2-.9 2-2V7H6v12zM19 4h-3.5l-1-1h-5l-1 1H5v2h14V4z"/></svg>
<div class="a" style="left:175.00px;top:1418.95px;width:2648.00px;height:1.10px;background:#d3d3d3;"></div>
<svg class="a" style="left:197.80px;top:1446.70px;" width="10.80" height="15.80" viewBox="0 0 10.8 15.8"><path d="M0 0L10.8 7.9 0 15.8z" fill="#0a0a0a"/></svg>
<div id="t88" class="t" style="left:227.60px;transform-origin:0 0;top:1442.73px;font-size:25.60px;line-height:25.60px;font-weight:700;color:#444a61;transform:scaleX(1.0871);-webkit-text-stroke:0.45px #444a61;">Jan De Pil</div>
<div id="t89" class="t" style="left:920.20px;transform-origin:0 0;top:1442.81px;font-size:25.50px;line-height:25.50px;font-weight:400;color:#1f1f1f;-webkit-text-stroke:0.25px #1f1f1f;">1</div>
<div id="t90" class="t" style="left:1134.00px;transform-origin:0 0;top:1442.81px;font-size:25.50px;line-height:25.50px;font-weight:400;color:#1f1f1f;transform:scaleX(1.0830);-webkit-text-stroke:0.25px #1f1f1f;">Covid-19 vaccinatie</div>
<div id="t91" class="t" style="left:1829.00px;transform-origin:0 0;top:1442.81px;font-size:25.50px;line-height:25.50px;font-weight:400;color:#1f1f1f;transform:scaleX(1.0349);-webkit-text-stroke:0.25px #1f1f1f;">2025-10-22</div>
<div id="t92" class="t" style="left:2040.40px;transform-origin:0 0;top:1442.81px;font-size:25.50px;line-height:25.50px;font-weight:400;color:#1f1f1f;letter-spacing:-0.884px;-webkit-text-stroke:0.25px #1f1f1f;">11:30</div>
<div id="t93" class="t" style="left:2227.50px;transform-origin:0 0;top:1442.81px;font-size:25.50px;line-height:25.50px;font-weight:400;color:#1f1f1f;transform:scaleX(1.1222);-webkit-text-stroke:0.25px #1f1f1f;">Non</div>
<svg class="a" style="left:2491.80px;top:1432.55px;" width="38.00" height="38.00" viewBox="0 0 24 24"><path fill="#5fa354" d="M16.59 7.58L10 14.17l-3.59-3.58L5 12l5 5 8-8zM12 2C6.48 2 2 6.48 2 12s4.48 10 10 10 10-4.48 10-10S17.52 2 12 2zm0 18c-4.42 0-8-3.58-8-8s3.58-8 8-8 8 3.58 8 8-3.58 8-8 8z"/></svg>
<svg class="a" style="left:2603.40px;top:1432.25px;" width="38.60" height="38.60" viewBox="0 0 24 24"><path fill="#464a5e" d="M3 17.25V21h3.75L17.81 9.94l-3.75-3.75L3 17.25zM20.71 7.04c.39-.39.39-1.02 0-1.41l-2.34-2.34c-.39-.39-1.02-.39-1.41 0l-1.83 1.83 3.75 3.75 1.83-1.83z"/></svg>
<svg class="a" style="left:2715.70px;top:1432.30px;" width="38.50" height="38.50" viewBox="0 0 24 24"><path fill="#464a5e" d="M6 19c0 1.1.9 2 2 2h8c1.1 0 2-.9 2-2V7H6v12zM19 4h-3.5l-1-1h-5l-1 1H5v2h14V4z"/></svg>
<div class="a" style="left:175.00px;top:1490.55px;width:2648.00px;height:1.10px;background:#d3d3d3;"></div>
<svg class="a" style="left:197.80px;top:1518.30px;" width="10.80" height="15.80" viewBox="0 0 10.8 15.8"><path d="M0 0L10.8 7.9 0 15.8z" fill="#0a0a0a"/></svg>
<div id="t94" class="t" style="left:227.60px;transform-origin:0 0;top:1514.33px;font-size:25.60px;line-height:25.60px;font-weight:700;color:#444a61;transform:scaleX(1.0871);-webkit-text-stroke:0.45px #444a61;">Jan De Pil</div>
<div id="t95" class="t" style="left:920.20px;transform-origin:0 0;top:1514.41px;font-size:25.50px;line-height:25.50px;font-weight:400;color:#1f1f1f;-webkit-text-stroke:0.25px #1f1f1f;">1</div>
<div id="t96" class="t" style="left:1134.00px;transform-origin:0 0;top:1514.41px;font-size:25.50px;line-height:25.50px;font-weight:400;color:#1f1f1f;transform:scaleX(1.1421);-webkit-text-stroke:0.25px #1f1f1f;">Opvolg gesprek Astma</div>
<div id="t97" class="t" style="left:1829.00px;transform-origin:0 0;top:1514.41px;font-size:25.50px;line-height:25.50px;font-weight:400;color:#1f1f1f;transform:scaleX(1.0349);-webkit-text-stroke:0.25px #1f1f1f;">2025-10-22</div>
<div id="t98" class="t" style="left:2040.40px;transform-origin:0 0;top:1514.41px;font-size:25.50px;line-height:25.50px;font-weight:400;color:#1f1f1f;letter-spacing:-0.163px;-webkit-text-stroke:0.25px #1f1f1f;">12:30</div>
<div id="t99" class="t" style="left:2227.50px;transform-origin:0 0;top:1514.41px;font-size:25.50px;line-height:25.50px;font-weight:400;color:#1f1f1f;transform:scaleX(1.1222);-webkit-text-stroke:0.25px #1f1f1f;">Non</div>
<svg class="a" style="left:2491.80px;top:1504.15px;" width="38.00" height="38.00" viewBox="0 0 24 24"><path fill="#5fa354" d="M16.59 7.58L10 14.17l-3.59-3.58L5 12l5 5 8-8zM12 2C6.48 2 2 6.48 2 12s4.48 10 10 10 10-4.48 10-10S17.52 2 12 2zm0 18c-4.42 0-8-3.58-8-8s3.58-8 8-8 8 3.58 8 8-3.58 8-8 8z"/></svg>
<svg class="a" style="left:2603.40px;top:1503.85px;" width="38.60" height="38.60" viewBox="0 0 24 24"><path fill="#464a5e" d="M3 17.25V21h3.75L17.81 9.94l-3.75-3.75L3 17.25zM20.71 7.04c.39-.39.39-1.02 0-1.41l-2.34-2.34c-.39-.39-1.02-.39-1.41 0l-1.83 1.83 3.75 3.75 1.83-1.83z"/></svg>
<svg class="a" style="left:2715.70px;top:1503.90px;" width="38.50" height="38.50" viewBox="0 0 24 24"><path fill="#464a5e" d="M6 19c0 1.1.9 2 2 2h8c1.1 0 2-.9 2-2V7H6v12zM19 4h-3.5l-1-1h-5l-1 1H5v2h14V4z"/></svg>
<div class="a" style="left:175.00px;top:1562.15px;width:2648.00px;height:1.10px;background:#d3d3d3;"></div>
<div class="a" style="left:175.00px;top:1562.60px;width:2656.00px;height:55.00px;background:#f5f5f5;border-bottom:1.3px solid #e0e0e0;box-sizing:border-box;"></div>
<div id="t100" class="t" style="left:921.00px;transform-origin:0 0;top:1579.42px;font-size:21.00px;line-height:21.00px;font-weight:700;color:#666;transform:scaleX(0.9847);">Total: 10</div>
<div class="a" style="left:2786.55px;top:1588.55px;width:4.90px;height:4.90px;background:#6f6f6f;border-radius:50%;"></div>
<div class="a" style="left:2786.55px;top:1600.55px;width:4.90px;height:4.90px;background:#6f6f6f;border-radius:50%;"></div>
<div class="a" style="left:2786.55px;top:1612.55px;width:4.90px;height:4.90px;background:#6f6f6f;border-radius:50%;"></div>
<div class="a" style="left:2798.95px;top:1588.55px;width:4.90px;height:4.90px;background:#6f6f6f;border-radius:50%;"></div>
<div class="a" style="left:2798.95px;top:1600.55px;width:4.90px;height:4.90px;background:#6f6f6f;border-radius:50%;"></div>
<div class="a" style="left:2798.95px;top:1612.55px;width:4.90px;height:4.90px;background:#6f6f6f;border-radius:50%;"></div>
<svg class="a" style="left:211.20px;top:1644.60px;" width="28.00" height="28.00" viewBox="0 0 24 24"><path fill="#a6a6a6" d="M18.41 16.59L13.82 12l4.59-4.59L17 6l-6 6 6 6zM6 6h2v12H6z"/></svg>
<svg class="a" style="left:273.90px;top:1644.60px;" width="28.00" height="28.00" viewBox="0 0 24 24"><path fill="#a6a6a6" d="M15.41 7.41L14 6l-6 6 6 6 1.41-1.41L10.83 12z"/></svg>
<div class="a" style="left:328.00px;top:1636.00px;width:42.00px;height:42.00px;background:#5c6075;border-radius:50%;"></div>
<div id="t101" class="t" style="left:345.00px;transform-origin:0 0;top:1645.24px;font-size:25.00px;line-height:25.00px;font-weight:400;color:#fff;transform:scaleX(0.5753);">1</div>
<svg class="a" style="left:397.40px;top:1644.60px;" width="28.00" height="28.00" viewBox="0 0 24 24"><path fill="#a6a6a6" d="M10 6L8.59 7.41 13.17 12l-4.58 4.59L10 18l6-6z"/></svg>
<svg class="a" style="left:460.90px;top:1644.60px;" width="28.00" height="28.00" viewBox="0 0 24 24"><path fill="#a6a6a6" d="M5.59 7.41L10.18 12l-4.59 4.59L7 18l6-6-6-6zM16 6h2v12h-2z"/></svg>
<div id="t102" class="t" style="left:2585.40px;transform-origin:0 0;top:1651.48px;font-size:21.40px;line-height:21.40px;font-weight:400;color:#1e1e1e;transform:scaleX(0.9634);-webkit-text-stroke:0.25px #1e1e1e;">page 1 de 1 (10 éléments)</div>
<div class="a" style="left:2814.00px;top:1547.80px;width:96.00px;height:96.00px;background:#464a5e;border-radius:50%;box-shadow:0 3px 14px rgba(0,0,0,0.28);"></div>
<svg class="a" style="left:2836.70px;top:1568.60px;" width="52.80" height="52.80" viewBox="0 0 54 54"><g fill="none" stroke="#fff" stroke-width="3.5" stroke-linecap="round" stroke-linejoin="round">
<path d="M9.4 14.2h27.6a3.4 3.4 0 0 1 3.4 3.4v18.6a3.4 3.4 0 0 1-3.4 3.4H16.6L6.6 48V17.6a3.4 3.4 0 0 1 3.4-3.4z"/>
<path d="M17.4 6.4h26.8a3.6 3.6 0 0 1 3.6 3.6v18.6"/></g></svg>
</div></body></html>
